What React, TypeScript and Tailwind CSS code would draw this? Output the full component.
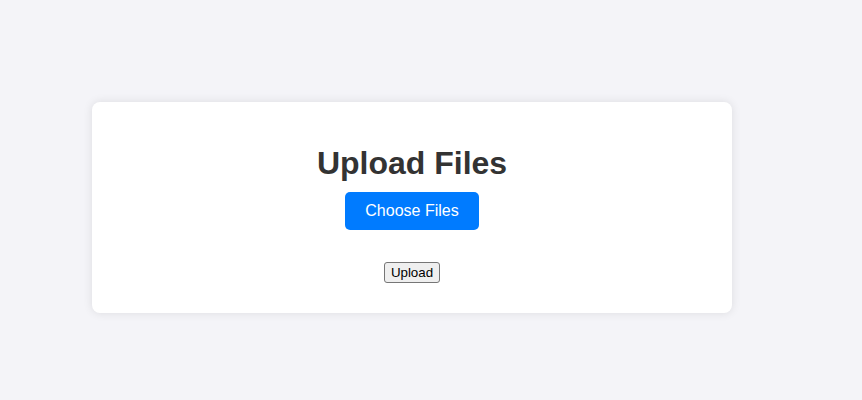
export default function App() {
  return (
    <div
      className="min-h-[400px] w-full bg-[#f4f4f8] pt-[102px] pl-[92px]"
      style={{ fontFamily: '"Liberation Sans", Arial, sans-serif' }}
    >
      <div className="flex h-[211px] w-[640px] flex-col items-center rounded-[8px] bg-white pt-[21px] shadow-[0_0_10px_rgba(0,0,0,0.1)]">
        <h1 className="mt-[22px] mb-[10px] text-[32px] leading-[37px] font-bold text-[#333333]">
          Upload Files
        </h1>
        <label className="inline-block cursor-pointer rounded-[5px] bg-[#007bff] px-[20px] py-[10px] text-[16px] leading-[18px] text-white">
          Choose Files
          <input type="file" multiple className="hidden" />
        </label>
        <button className="mt-[32px] rounded-[3px] border border-[#767676] bg-[#efefef] px-[6px] py-[1px] text-[13.33px] leading-[17px] text-black">
          Upload
        </button>
      </div>
    </div>
  );
}
